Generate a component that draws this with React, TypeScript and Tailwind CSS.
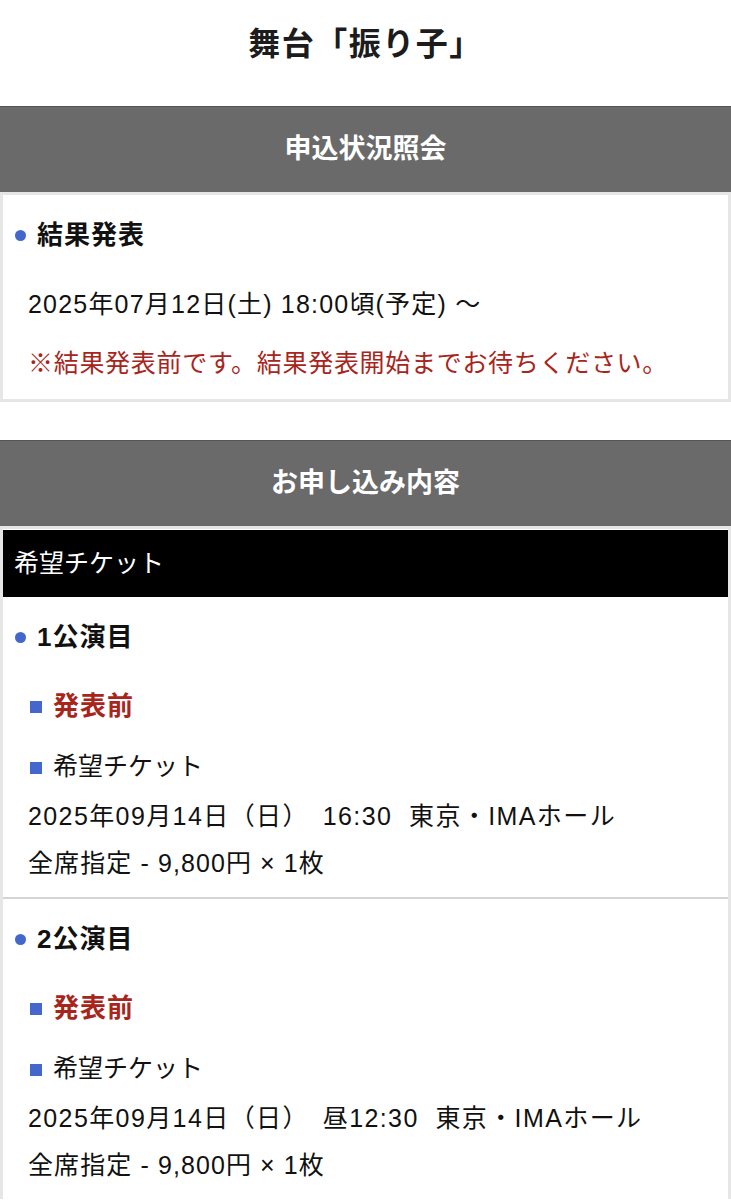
import React from "react";

const font = {
  fontFamily: '"Liberation Sans", "Noto Sans CJK JP", sans-serif',
};

function Dot() {
  return <span className="inline-block w-[11px] h-[11px] rounded-full bg-[#4467cc] mr-[11px] shrink-0" />;
}

function Square() {
  return <span className="inline-block w-[12px] h-[12px] bg-[#4467cc] mr-[11px] shrink-0 translate-y-[1px]" />;
}

function Perf({ n, time }: { n: string; time: string }) {
  return (
    <div className="pt-[20px] pb-[10px]">
      <div className="flex items-center pl-[12px] h-[40px] text-[26px] font-bold text-[#111] tracking-[1px]">
        <Dot />
        <span>{n}公演目</span>
      </div>
      <div className="flex items-center pl-[27px] h-[40px] mt-[29px] text-[26px] font-bold text-[#a8251c] tracking-[1px]">
        <Square />
        <span>発表前</span>
      </div>
      <div className="flex items-center pl-[27px] h-[47px] mt-[17px] text-[25px] text-[#111]">
        <Square />
        <span>希望チケット</span>
      </div>
      <div className="pl-[25px] leading-[47px] mt-[3px] text-[25px] text-[#111] whitespace-pre tracking-[1.4px]">
        {`2025年09月14日（日）　${time}  東京・IMAホール`}
      </div>
      <div className="pl-[25px] leading-[47px] text-[25px] text-[#111] whitespace-pre tracking-[1.1px]">
        全席指定 - 9,800円 × 1枚
      </div>
    </div>
  );
}

export default function App() {
  return (
    <div className="w-[731px] min-h-[1200px] bg-white" style={font}>
      <div className="h-[106px] pt-[22px] flex justify-center">
        <h1 className="text-[32px] font-bold leading-[44px] text-[#1c1c1c] tracking-[1.5px]">舞台「振り子」</h1>
      </div>

      <div className="h-[86px] bg-[#6a6a6a] border-t border-[#555] flex items-center justify-center">
        <span className="text-white font-bold text-[27px]">申込状況照会</span>
      </div>

      <div className="h-[210px] border-[3px] border-[#e6e6e6] bg-white">
        <div className="pt-[20px]">
          <div className="flex items-center pl-[12px] h-[40px] text-[26px] font-bold text-[#111] tracking-[1px]">
            <Dot />
            <span>結果発表</span>
          </div>
          <div className="pl-[25px] leading-[40px] mt-[29px] text-[25px] text-[#111] whitespace-pre tracking-[1.2px]">
            2025年07月12日(土) 18:00頃(予定) 〜
          </div>
          <div className="pl-[25px] leading-[40px] mt-[19px] text-[25px] text-[#a8251c] tracking-[0.7px]">
            ※結果発表前です。結果発表開始までお待ちください。
          </div>
        </div>
      </div>

      <div className="h-[38px]" />

      <div className="h-[86px] bg-[#6a6a6a] border-t border-[#555] flex items-center justify-center">
        <span className="text-white font-bold text-[27px]">お申し込み内容</span>
      </div>

      <div className="border-[3px] border-b-0 border-[#e6e6e6] bg-white">
        <div className="h-[67px] mt-[1px] bg-black flex items-center pl-[11px]">
          <span className="text-white text-[25px]">希望チケット</span>
        </div>
        <Perf n="1" time="16:30" />
        <div className="h-[2px] bg-[#d4d4d4]" />
        <Perf n="2" time="昼12:30" />
      </div>
    </div>
  );
}
